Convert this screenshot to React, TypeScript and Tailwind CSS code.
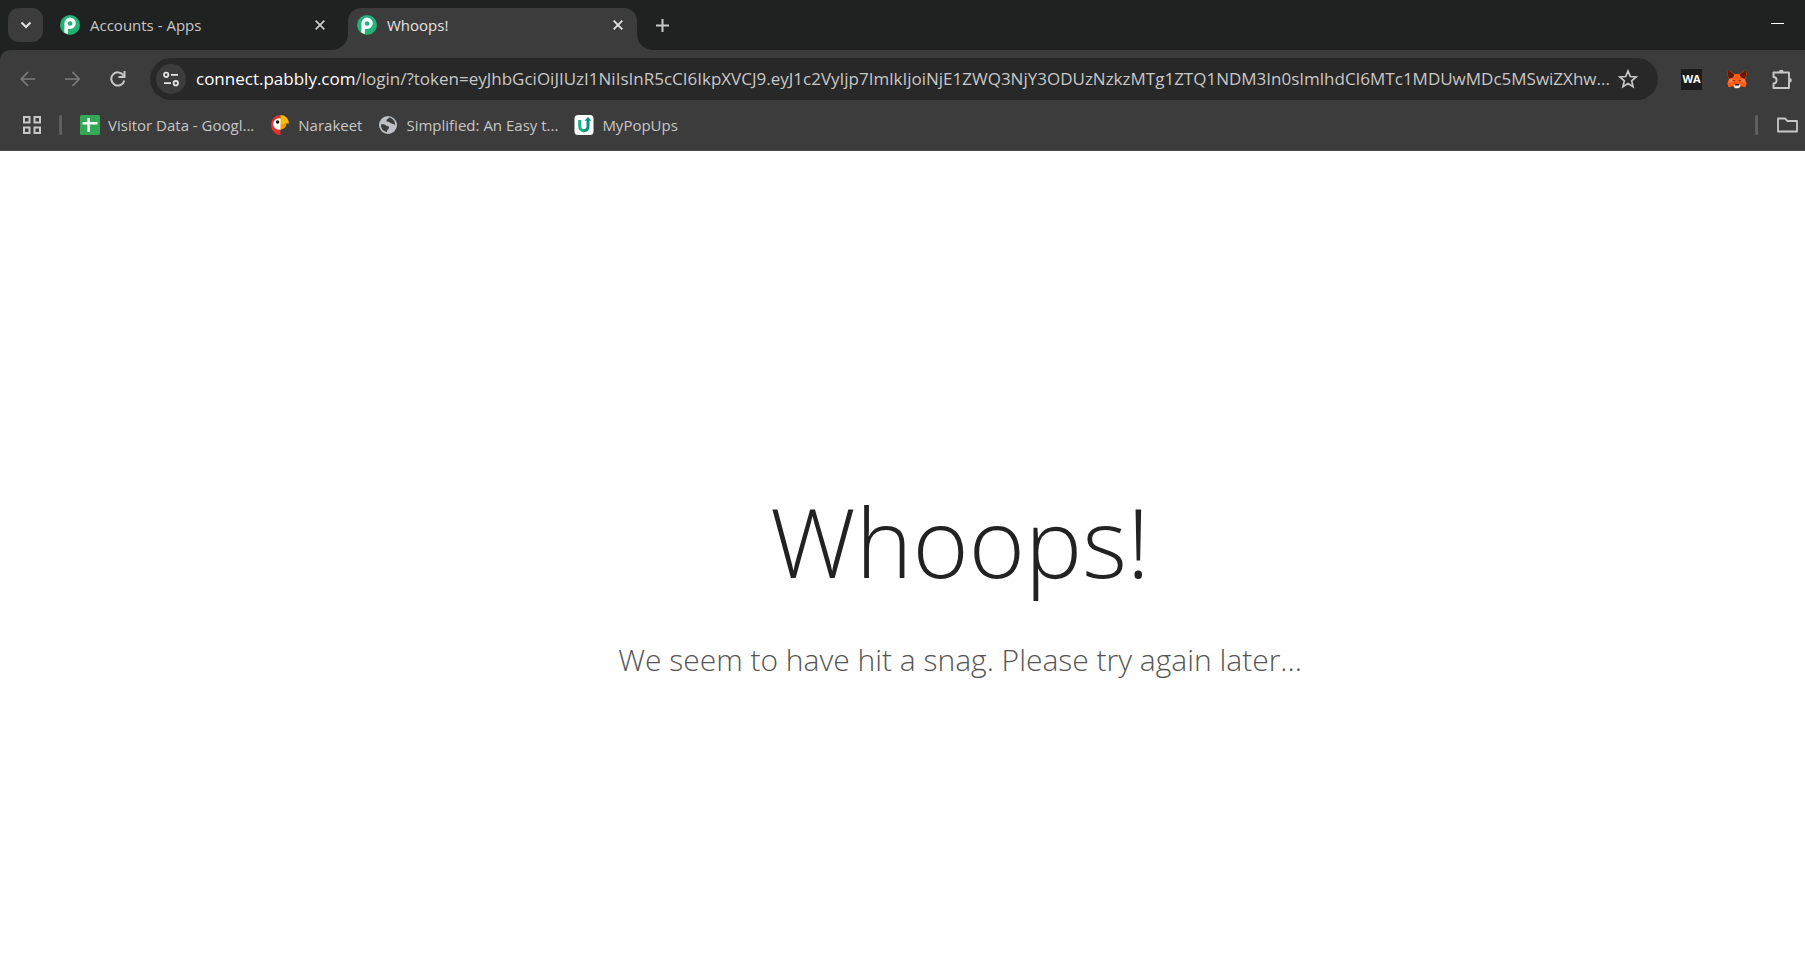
import type { ReactNode } from 'react';

const URL_PATH =
  '/login/?token=eyJhbGciOiJIUzI1NiIsInR5cCI6IkpXVCJ9.eyJ1c2VyIjp7ImlkIjoiNjE1ZWQ3NjY3ODUzNzkzMTg1ZTQ1NDM3In0sImlhdCI6MTc1MDUwMDc5MSwiZXhw...';

function PabblyIcon() {
  return (
    <svg viewBox="0 0 20 20" className="size-5 shrink-0">
      <circle cx="10" cy="10" r="10" fill="#20b276" />
      <path d="M4.400 17.500V8.500a5.700 5.700 0 1 1 5.700 5.500H7.800v5z" fill="#fff" />
      <circle cx="10.100" cy="8.500" r="2.300" fill="#20b276" />
    </svg>
  );
}

function CloseButton({ className, label }: { className: string; label: string }) {
  return (
    <button type="button" aria-label={label} className={className}>
      <svg viewBox="0 0 10 10" className="size-[10px]" fill="none" stroke="currentColor" strokeWidth="1.8">
        <path d="M.7.7l8.6 8.6M9.3.7L.7 9.3" />
      </svg>
    </button>
  );
}

function SheetsIcon() {
  return (
    <svg viewBox="0 0 20 20" className="size-5 shrink-0">
      <rect width="20" height="20" rx="1.5" fill="#34a853" />
      <path d="M2.5 8.2h15M8.6 3v14" stroke="#fff" strokeWidth="2.4" fill="none" />
    </svg>
  );
}

function NarakeetIcon() {
  return (
    <svg viewBox="0 0 20 20" className="size-5 shrink-0">
      <path d="M10.500 0A9.500 9.500 0 0 0 1 9.500c0 5.500 4 10.500 9.500 10.500v-5z" fill="#e5322d" />
      <circle cx="9" cy="9" r="5.800" fill="#fff" />
      <path d="M10.500 0a8.500 8.500 0 0 1 8.500 8.500h-8.500z" fill="#fbbc04" />
      <path d="M10.500 8.500h6a6 6 0 0 1-6 6z" fill="#f29900" />
      <circle cx="7.600" cy="7" r="1.700" fill="#111" />
    </svg>
  );
}

function GlobeIcon() {
  return (
    <svg viewBox="0 0 20 20" className="size-5 shrink-0">
      <circle cx="10" cy="10" r="9" fill="#bdc1c6" />
      <path
        d="M3 9.500c2-.5 4 0 5 1s3 0 3 2-2 1.500-2 4.500C5 16.500 2.500 13 3 9.500zM11 2.500c-1 2-3 1.500-2.500 3.500s3 .5 4 2 3.500 0 4.500 2.500c.5-4-2-7.500-6-8z"
        fill="#3c3c3c"
      />
    </svg>
  );
}

function PopUpsIcon() {
  return (
    <svg viewBox="0 0 20 20" className="size-5 shrink-0">
      <rect x=".5" width="19" height="20" rx="3.500" fill="#fff" />
      <path d="M5.700 5v6.500a4.200 4.200 0 0 0 4.300 4.200" stroke="#12b47c" strokeWidth="3" fill="none" />
      <path d="M9.500 15.700c3 0 4.500-1.700 4.500-4.200V5" stroke="#0b8f80" strokeWidth="3" fill="none" />
      <path d="M10.500 5.800L14 2l3.500 3.800z" fill="#0b8f80" />
    </svg>
  );
}

function FoxIcon() {
  return (
    <svg viewBox="0 0 20 20" className="size-5">
      <path
        d="M1 1l6.500 4h5L19 1l.7 5-1.700 4.500 1.700 4-1.200 3.700-4.300-1-2.200 1.800H8l-2.200-1.800-4.300 1L.3 14.500l1.700-4L.3 6z"
        fill="#ff5c16"
      />
      <path d="M1 1l6.500 4.500L6 8.500 2.200 9.800.5 6.500zM19 1l-6.500 4.500L14 8.500l3.800 1.300 1.700-3.300z" fill="#661800" />
      <path d="M2 10.500L6 9l1 3.500-5.500 1.500zM18 10.500L14 9l-1 3.500 5.500 1.500z" fill="#ff7a3c" />
      <path d="M5.500 10.800l2.300.6-.3 1.400zM14.500 10.800l-2.300.6.3 1.400z" fill="#2b1a17" />
      <path d="M6.300 15.500l2 .8h3.400l2-.8-1 2.800-1.200 1h-3l-1.200-1z" fill="#f3ece8" />
      <path d="M8.300 15h3.400l.3 1.500H8z" fill="#2b1a17" />
    </svg>
  );
}

function Bookmark({ icon, children }: { icon: ReactNode; children: ReactNode }) {
  return (
    <a href="#" className="flex items-center gap-2 whitespace-nowrap">
      {icon}
      <span>{children}</span>
    </a>
  );
}

function TabStrip() {
  return (
    <div className="flex h-[50px] bg-[#3c3c3c] text-[15px]">
      <div className="flex w-[348px] shrink-0 items-center rounded-br-2xl bg-[#202221] pr-[23px] pl-2 text-[#c7c7c7]">
        <button
          type="button"
          aria-label="Search tabs"
          className="flex h-[34px] w-[35px] items-center justify-center rounded-[11px] bg-[#3c3c3c] text-[#e3e3e3]"
        >
          <svg viewBox="0 0 12 8" className="h-2 w-3" fill="none" stroke="currentColor" strokeWidth="2">
            <path d="M1.500 1.500L6 6l4.500-4.500" />
          </svg>
        </button>
        <div className="ml-[17px] flex flex-1 items-center gap-[10px]">
          <PabblyIcon />
          <span className="flex-1">Accounts - Apps</span>
          <CloseButton label="Close Accounts - Apps" className="text-[#c7c7c7]" />
        </div>
      </div>
      <div className="w-[289px] shrink-0 bg-linear-to-b from-[#202221] from-50% to-[#3c3c3c] to-50% pt-2">
        <div className="flex h-[42px] items-center gap-[10px] rounded-t-[13px] bg-[#3c3c3c] pr-[14px] pb-2 pl-[9px] text-[#e3e3e3]">
          <PabblyIcon />
          <span className="flex-1">Whoops!</span>
          <CloseButton label="Close Whoops!" className="text-[#e3e3e3]" />
        </div>
      </div>
      <div className="flex flex-1 items-center justify-between rounded-bl-2xl bg-[#202221] pr-[21px] pl-[19px]">
        <button type="button" aria-label="New tab" className="text-[#c7c7c7]">
          <svg viewBox="0 0 13 13" className="size-[13px]" stroke="currentColor" strokeWidth="2">
            <path d="M6.500 0v13M0 6.500h13" />
          </svg>
        </button>
        <button type="button" aria-label="Minimize" className="flex h-5 w-[13px] items-start pt-2">
          <span className="h-px w-full bg-white" />
        </button>
      </div>
    </div>
  );
}

function AddressRow() {
  return (
    <div className="flex items-center pt-2 pr-3 pl-5">
      <div className="flex items-center gap-[29px]">
        <button type="button" aria-label="Back" className="text-[#7c7c7c]">
          <svg viewBox="0 0 16 16" className="size-4" fill="none" stroke="currentColor" strokeWidth="1.700">
            <path d="M15 8H1.500M8 1L1.300 8 8 15" />
          </svg>
        </button>
        <button type="button" aria-label="Forward" className="text-[#7c7c7c]">
          <svg viewBox="0 0 16 16" className="size-4" fill="none" stroke="currentColor" strokeWidth="1.700">
            <path d="M0 8h14M7.500 1l6.700 7-6.700 7" />
          </svg>
        </button>
        <button type="button" aria-label="Reload" className="text-[#c7c7c7]">
          <svg viewBox="0 0 16 16" className="size-4" fill="none" stroke="currentColor" strokeWidth="2">
            <path d="M13.500 4.500A6.600 6.600 0 1 0 14.300 9.500M14.500 0v6H8.500" />
          </svg>
        </button>
      </div>
      <div className="ml-6 flex h-[42px] min-w-0 flex-1 items-center rounded-full bg-[#282828] pr-5 pl-[6px]">
        <button
          type="button"
          aria-label="View site information"
          className="flex size-[30px] shrink-0 items-center justify-center rounded-full bg-[#3c3c3c] text-[#e3e3e3]"
        >
          <svg viewBox="0 0 16 16" className="size-4" fill="none" stroke="currentColor" strokeWidth="1.800">
            <circle cx="3.200" cy="3.800" r="2.200" />
            <path d="M8 3.800h7M1 12.200h7" />
            <circle cx="12.800" cy="12.200" r="2.200" />
          </svg>
        </button>
        <div className="ml-[10px] flex-1 text-[17px] whitespace-nowrap text-[#c7c7c7]">
          <span className="text-white">connect.pabbly.com</span>
          {URL_PATH}
        </div>
        <button type="button" aria-label="Bookmark this tab" className="text-[#c7c7c7]">
          <svg viewBox="0 0 20 20" className="size-5" fill="none" stroke="currentColor" strokeWidth="1.700">
            <path d="M10 2l2.300 5.500 5.900.5-4.500 3.900 1.400 5.800L10 14.600l-5.100 3.100 1.400-5.800L1.800 8l5.900-.5z" />
          </svg>
        </button>
      </div>
      <div className="ml-[23px] flex items-center gap-[25px]">
        <button
          type="button"
          aria-label="WA extension"
          className="flex size-[21px] items-center justify-center bg-[#1b1b1b] text-[11px] font-bold text-white"
        >
          WA
        </button>
        <button type="button" aria-label="MetaMask">
          <FoxIcon />
        </button>
        <button type="button" aria-label="Extensions" className="text-[#c7c7c7]">
          <svg viewBox="0 0 21 21" className="size-[21px]" fill="none" stroke="currentColor" strokeWidth="1.900">
            <path d="M1.500 3.500h15.500v15.500H1.500v-4.500c2 0 3.100-1.500 3.100-3.200S3.500 8 1.500 8z" strokeLinejoin="round" />
            <path d="M7 3a2.300 2.300 0 0 1 4.600 0zM17.500 9a2.300 2.300 0 0 1 0 4.600z" fill="currentColor" stroke="none" />
          </svg>
        </button>
      </div>
    </div>
  );
}

function BookmarksBar() {
  return (
    <div className="flex h-[50px] items-center pr-[7px] pl-[23px] text-[15px] text-[#c7c7c7]">
      <button type="button" aria-label="Apps">
        <svg viewBox="0 0 18 18" className="size-[18px]" fill="none" stroke="currentColor" strokeWidth="2">
          <path d="M1 1h5.500v5.500H1zM11.500 1H17v5.500h-5.500zM1 11.500h5.500V17H1zM11.500 11.500H17V17h-5.500z" />
        </svg>
      </button>
      <span className="mx-[18px] h-5 w-[3px] rounded-full bg-[#5e5e5e]" />
      <nav className="flex flex-1 items-center gap-4">
        <Bookmark icon={<SheetsIcon />}>Visitor Data - Googl...</Bookmark>
        <Bookmark icon={<NarakeetIcon />}>Narakeet</Bookmark>
        <Bookmark icon={<GlobeIcon />}>Simplified: An Easy t...</Bookmark>
        <Bookmark icon={<PopUpsIcon />}>MyPopUps</Bookmark>
      </nav>
      <span className="mr-[19px] h-5 w-[3px] rounded-full bg-[#5e5e5e]" />
      <button type="button" aria-label="All bookmarks">
        <svg viewBox="0 0 21 16" className="h-4 w-[21px]" fill="none" stroke="currentColor" strokeWidth="1.800">
          <path d="M1 14.500v-13h7l2.500 2.500H20v10.500z" strokeLinejoin="round" />
        </svg>
      </button>
    </div>
  );
}

function App() {
  return (
    <div className="flex min-h-screen flex-col bg-white font-['Open_Sans',sans-serif]">
      <header className="bg-[#202221]">
        <TabStrip />
        <div className="rounded-tl-[10px] border-b border-[#4a4a4a] bg-[#3c3c3c]">
          <AddressRow />
          <BookmarksBar />
        </div>
      </header>
      <main className="flex flex-1 flex-col items-center pt-[318px] pl-[115px] text-center font-light">
        <h1 className="text-[96px] leading-[144px] text-[#222]">Whoops!</h1>
        <p className="mt-6 text-[30px] leading-[46px] text-[#555]">
          We seem to have hit a snag. Please try again later...
        </p>
      </main>
    </div>
  );
}

export default App;
